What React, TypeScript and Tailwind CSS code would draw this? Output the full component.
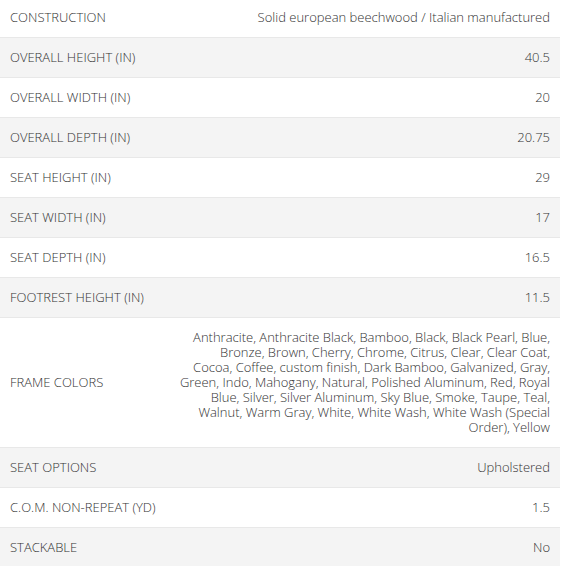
import React from 'react';

const specs: [string, string][] = [
  ['CONSTRUCTION', 'Solid european beechwood / Italian manufactured'],
  ['OVERALL HEIGHT (IN)', '40.5'],
  ['OVERALL WIDTH (IN)', '20'],
  ['OVERALL DEPTH (IN)', '20.75'],
  ['SEAT HEIGHT (IN)', '29'],
  ['SEAT WIDTH (IN)', '17'],
  ['SEAT DEPTH (IN)', '16.5'],
  ['FOOTREST HEIGHT (IN)', '11.5'],
  [
    'FRAME COLORS',
    'Anthracite, Anthracite Black, Bamboo, Black, Black Pearl, Blue, Bronze, Brown, Cherry, Chrome, Citrus, Clear, Clear Coat, Cocoa, Coffee, custom finish, Dark Bamboo, Galvanized, Gray, Green, Indo, Mahogany, Natural, Polished Aluminum, Red, Royal Blue, Silver, Silver Aluminum, Sky Blue, Smoke, Taupe, Teal, Walnut, Warm Gray, White, White Wash, White Wash (Special Order), Yellow',
  ],
  ['SEAT OPTIONS', 'Upholstered'],
  ['C.O.M. NON-REPEAT (YD)', '1.5'],
  ['STACKABLE', 'No'],
];

export default function App() {
  return (
    <div className="w-[560px] -mt-[3px] bg-white font-['Open_Sans',sans-serif] font-light text-[13px] leading-[15px] text-[#333]">
      {specs.map(([label, value], i) => (
        <div
          key={label}
          className={`grid grid-cols-[168px_1fr] border-t border-[#e8e8e8] ${i % 2 === 1 ? 'bg-[#f4f4f4]' : 'bg-white'}`}
        >
          <div className="px-[10px] py-3 flex items-center">{label}</div>
          <div className="px-[10px] py-3 text-right">{value}</div>
        </div>
      ))}
    </div>
  );
}
